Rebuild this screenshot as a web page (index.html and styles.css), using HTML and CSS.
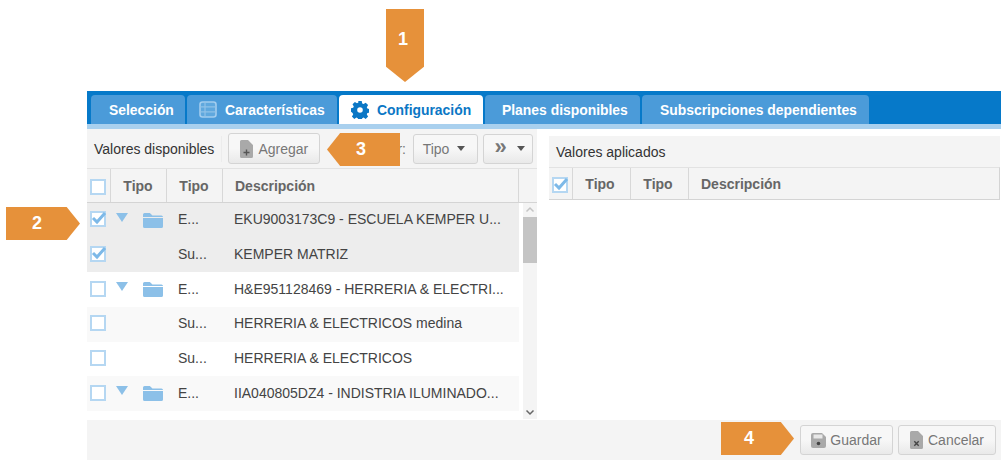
FILE: index.html
```html
<!DOCTYPE html>
<html lang="es">
<head>
<meta charset="utf-8">
<title>Configuración</title>
<link rel="stylesheet" href="styles.css">
</head>
<body>
<div class="app">
  <nav class="tabs">
    <a class="tab tab-sel">Selección</a>
    <a class="tab tab-car">
      <svg class="tab-icon" width="18" height="17" viewBox="0 0 18 17"><rect x="1" y="1" width="16" height="15" rx="2.500" fill="#5fa8de" stroke="#a3cdee" stroke-width="1.600"/><path d="M6 1.500V15.500M1.500 5.800H16.500M1.500 10.800H16.500" stroke="#8fc1e8" stroke-width="1.200" fill="none"/></svg>
      Características</a>
    <a class="tab tab-conf active">
      <svg class="tab-icon" width="18" height="18" viewBox="0 0 18 18"><path fill="#0b77c5" fill-rule="evenodd" d="M7.300 0h3.400l.5 2.400 1.400.6 2.100-1.300 2.400 2.400-1.300 2.100.6 1.400 2.400.5v3.400l-2.400.5-.6 1.400 1.300 2.100-2.400 2.400-2.100-1.300-1.400.6-.5 2.400H7.300l-.5-2.400-1.400-.6-2.100 1.300-2.400-2.400 1.300-2.100-.6-1.400L-.2 10.700V7.300l2.400-.5.6-1.400-1.300-2.100 2.400-2.400 2.100 1.300 1.400-.6zM9 6.200a2.800 2.800 0 1 0 0 5.600 2.800 2.800 0 0 0 0-5.600z"/></svg>
      Configuración</a>
    <a class="tab tab-plan">Planes disponibles</a>
    <a class="tab tab-sub">Subscripciones dependientes</a>
  </nav>
  <div class="stripe"></div>

  <main class="panels">
    <section class="panel-left">
      <div class="toolbar">
        <span class="toolbar-title">Valores disponibles</span>
        <span class="toolbar-sep"></span>
        <button class="btn btn-add">
          <svg class="btn-icon" width="13" height="18" viewBox="0 0 13 18"><path fill="#a9a9a9" d="M1.500 0H8l5 5v11.500a1.500 1.500 0 0 1-1.500 1.500h-10A1.500 1.500 0 0 1 0 16.500v-15A1.500 1.500 0 0 1 1.500 0z"/><path d="M6.500 9.500v6M3.500 12.500h6" stroke="#555" stroke-width="1.400"/></svg>
          Agregar</button>
        <span class="toolbar-label">r:</span>
        <button class="btn btn-drop btn-tipo">Tipo <i class="caret"></i></button>
        <button class="btn btn-drop btn-more"><b class="more-glyph">»</b> <i class="caret"></i></button>
      </div>
      <div class="grid-head grid-cols">
        <div class="cell-check"><span class="check"></span></div>
        <div class="hcell center">Tipo</div>
        <div class="hcell center">Tipo</div>
        <div class="hcell desc">Descripción</div>
        <div class="hcell-rest"></div>
      </div>
      <div class="grid-area">
        <div class="rows">
          <div class="row row-sel">
            <div class="cell-check"><span class="check checked"><svg width="17" height="17" viewBox="0 0 17 17"><path d="M3 8l4 4 8-9" fill="none" stroke="#7db9e8" stroke-width="3"/></svg></span></div>
            <div class="cell-tree"><i class="tri"></i><svg class="folder" width="20" height="15" viewBox="0 0 19 15" preserveAspectRatio="none"><path fill="#8cc0e8" d="M0 1.500A1.500 1.500 0 0 1 1.500 0h5L9 2.500h8.500A1.500 1.500 0 0 1 19 4H0zM0 5h19v8.500a1.500 1.500 0 0 1-1.500 1.500h-16A1.500 1.500 0 0 1 0 13.500z"/></svg></div>
            <div class="cell-type">E...</div>
            <div class="cell-desc">EKU9003173C9 - ESCUELA KEMPER U...</div>
          </div>
          <div class="row row-sel">
            <div class="cell-check"><span class="check checked"><svg width="17" height="17" viewBox="0 0 17 17"><path d="M3 8l4 4 8-9" fill="none" stroke="#7db9e8" stroke-width="3"/></svg></span></div>
            <div class="cell-tree"></div>
            <div class="cell-type">Su...</div>
            <div class="cell-desc">KEMPER MATRIZ</div>
          </div>
          <div class="row">
            <div class="cell-check"><span class="check"></span></div>
            <div class="cell-tree"><i class="tri"></i><svg class="folder" width="20" height="15" viewBox="0 0 19 15" preserveAspectRatio="none"><path fill="#8cc0e8" d="M0 1.500A1.500 1.500 0 0 1 1.500 0h5L9 2.500h8.500A1.500 1.500 0 0 1 19 4H0zM0 5h19v8.500a1.500 1.500 0 0 1-1.500 1.500h-16A1.500 1.500 0 0 1 0 13.500z"/></svg></div>
            <div class="cell-type">E...</div>
            <div class="cell-desc">H&amp;E951128469 - HERRERIA &amp; ELECTRI...</div>
          </div>
          <div class="row row-alt">
            <div class="cell-check"><span class="check"></span></div>
            <div class="cell-tree"></div>
            <div class="cell-type">Su...</div>
            <div class="cell-desc">HERRERIA &amp; ELECTRICOS medina</div>
          </div>
          <div class="row">
            <div class="cell-check"><span class="check"></span></div>
            <div class="cell-tree"></div>
            <div class="cell-type">Su...</div>
            <div class="cell-desc">HERRERIA &amp; ELECTRICOS</div>
          </div>
          <div class="row row-alt">
            <div class="cell-check"><span class="check"></span></div>
            <div class="cell-tree"><i class="tri"></i><svg class="folder" width="20" height="15" viewBox="0 0 19 15" preserveAspectRatio="none"><path fill="#8cc0e8" d="M0 1.500A1.500 1.500 0 0 1 1.500 0h5L9 2.500h8.500A1.500 1.500 0 0 1 19 4H0zM0 5h19v8.500a1.500 1.500 0 0 1-1.500 1.500h-16A1.500 1.500 0 0 1 0 13.500z"/></svg></div>
            <div class="cell-type">E...</div>
            <div class="cell-desc">IIA040805DZ4 - INDISTRIA ILUMINADO...</div>
          </div>
        </div>
        <div class="scrollbar">
          <svg class="sb-arrow" width="14" height="14" viewBox="0 0 14 14"><path d="M3.500 8.500L7 5l3.500 3.500" fill="none" stroke="#c4c4c4" stroke-width="1.500"/></svg>
          <div class="sb-thumb"></div>
          <svg class="sb-arrow sb-down" width="14" height="14" viewBox="0 0 14 14"><path d="M3.500 5.500L7 9l3.500-3.500" fill="none" stroke="#666" stroke-width="1.500"/></svg>
        </div>
      </div>
    </section>

    <section class="panel-right">
      <div class="toolbar-right">Valores aplicados</div>
      <div class="grid-head grid-cols-right">
        <div class="cell-check"><span class="check checked"><svg width="17" height="17" viewBox="0 0 17 17"><path d="M3 8l4 4 8-9" fill="none" stroke="#7db9e8" stroke-width="3"/></svg></span></div>
        <div class="hcell center">Tipo</div>
        <div class="hcell center">Tipo</div>
        <div class="hcell desc">Descripción</div>
      </div>
    </section>
  </main>

  <footer class="footer">
    <button class="btn btn-save">
      <svg class="btn-icon" width="15" height="15" viewBox="0 0 15 15"><path fill="#a9a9a9" d="M2 0h9l4 4v9a2 2 0 0 1-2 2H2a2 2 0 0 1-2-2V2a2 2 0 0 1 2-2z"/><rect x="2.500" y="1.500" width="9" height="4" fill="#e8e8e8"/><circle cx="7.500" cy="10.500" r="1.800" fill="#444"/></svg>
      Guardar</button>
    <button class="btn btn-cancel">
      <svg class="btn-icon" width="13" height="18" viewBox="0 0 13 18"><path fill="#a9a9a9" d="M1.500 0H8l5 5v11.500a1.500 1.500 0 0 1-1.500 1.500h-10A1.500 1.500 0 0 1 0 16.500v-15A1.500 1.500 0 0 1 1.500 0z"/><path d="M4.300 10.300l4.400 4.400M8.700 10.300l-4.400 4.400" stroke="#444" stroke-width="1.400"/></svg>
      Cancelar</button>
  </footer>
</div>

<div class="callout callout-down c1">1</div>
<div class="callout callout-right c2">2</div>
<div class="callout callout-left c3">3</div>
<div class="callout callout-right c4">4</div>
</body>
</html>
```

FILE: styles.css
```css
* { box-sizing: border-box; }
html, body { margin: 0; padding: 0; background: #fff; }
body {
  width: 1003px;
  height: 466px;
  overflow: hidden;
  position: relative;
  font-family: "Liberation Sans", Arial, sans-serif;
  font-size: 14px;
  color: #333;
}
.app { margin: 91px 0 0 87px; width: 914px; }

/* tabs */
.tabs {
  display: flex;
  gap: 2px;
  height: 33px;
  padding: 4px 0 0 4px;
  background: #0679c9;
}
.tab {
  display: flex;
  align-items: center;
  height: 29px;
  border-radius: 4px 4px 0 0;
  background: #4b9bd9;
  color: #fff;
  font-weight: bold;
  font-size: 13.900px;
  white-space: nowrap;
}
.tab.active { background: #fff; color: #0b77c5; }
.tab-sel { width: 94px; padding-left: 18px; }
.tab-car { width: 150px; padding-left: 12px; }
.tab-conf { width: 144px; padding-left: 12px; }
.tab-plan { width: 155px; padding-left: 17px; }
.tab-sub { width: 227px; padding-left: 18px; }
.tab-icon { margin-right: 8px; flex: none; }
.stripe { height: 5px; background: #a9d0ee; }

/* panels */
.panels { display: flex; height: 291px; }
.panel-left { width: 450px; flex: none; }
.panel-right { width: 451px; margin-left: 12px; padding-top: 7px; }

.toolbar {
  display: flex;
  align-items: center;
  height: 40px;
  padding: 0 4px 0 7px;
  background: #f4f4f4;
  border-bottom: 1px solid #e2e2e2;
}
.toolbar-title { font-size: 14px; color: #333; white-space: nowrap; }
.toolbar-sep { width: 1px; height: 26px; margin: 0 6px 0 7px; background: #ececec; }
.toolbar-label { margin-left: auto; margin-right: 7px; color: #777; font-size: 14px; }

.btn {
  display: flex;
  align-items: center;
  justify-content: center;
  height: 31px;
  padding: 0;
  border: 1px solid #d4d4d4;
  border-radius: 3px;
  background: linear-gradient(#f7f7f7 0, #f7f7f7 50%, #e9e9e9 100%);
  font-family: inherit;
  font-size: 14px;
  color: #777;
}
.btn-add { width: 92px; gap: 5px; }
.btn-drop { height: 30px; }
.btn-tipo { width: 65px; gap: 8px; padding-right: 3px; }
.btn-more { width: 50px; margin-left: 5px; gap: 10px; padding-left: 3px; }
.more-glyph { font-size: 22px; line-height: 1; position: relative; top: -2px; }
.caret {
  width: 0;
  height: 0;
  border-left: 4px solid transparent;
  border-right: 4px solid transparent;
  border-top: 5px solid #555;
}

/* grid */
.grid-head {
  display: grid;
  height: 33px;
  background: #f4f4f4;
  border-bottom: 1px solid #d4d4d4;
}
.grid-cols { grid-template-columns: 23px 56px 56px 296px 1fr; height: 34px; }
.grid-cols-right { grid-template-columns: 23px 58px 58px 1fr; border-top: 1px solid #e2e2e2; border-right: 1px solid #d4d4d4; }
.hcell {
  display: flex;
  align-items: center;
  font-weight: bold;
  font-size: 14px;
  color: #666;
  border-left: 1px solid #d8d8d8;
}
.hcell-rest { border-left: 1px solid #d8d8d8; }
.hcell.center { justify-content: center; padding-right: 1px; }
.grid-cols-right .hcell.center { padding-right: 3px; }
.hcell.desc { padding-left: 12px; }

.cell-check { display: flex; align-items: center; padding-left: 3px; }
.check {
  position: relative;
  display: block;
  width: 16px;
  height: 16px;
  border: 2px solid #b5d7f2;
  background: #fff;
}
.check svg { position: absolute; left: -2px; top: -3px; }
.grid-head .check { margin-top: 3px; }

.grid-area { display: flex; height: 216px; }
.rows { width: 432px; margin-right: 4px; flex: none; }
.row {
  display: grid;
  grid-template-columns: 23px 56px 56px 1fr;
  align-items: center;
  height: 34.660px;
  padding-bottom: 2px;
  background: #fff;
}
.row-sel { background: #ededed; }
.row-alt { background: #f9f9f9; }
.row .cell-check { height: 100%; }
.cell-tree { display: flex; align-items: center; padding-left: 6px; position: relative; top: -1px; }
.tri {
  width: 0;
  height: 0;
  border-left: 6.500px solid transparent;
  border-right: 6.500px solid transparent;
  border-top: 9px solid #8cc0e8;
  position: relative;
  top: -1px;
}
.folder { margin-left: 15px; position: relative; top: 2px; }
.cell-type { padding-left: 12px; font-size: 14px; color: #444; white-space: nowrap; }
.cell-desc { padding-left: 12px; font-size: 14px; color: #444; white-space: nowrap; }

.scrollbar {
  display: flex;
  flex-direction: column;
  width: 14px;
  background: #f4f4f4;
}
.sb-arrow { flex: none; }
.sb-thumb { width: 14px; height: 46px; background: #c4c4c4; }
.sb-down { margin-top: auto; }

.toolbar-right {
  display: flex;
  align-items: center;
  height: 31px;
  padding-left: 7px;
  background: #f4f4f4;
  font-size: 14px;
  color: #333;
}

/* footer */
.footer {
  display: flex;
  align-items: center;
  justify-content: flex-end;
  gap: 5px;
  height: 40px;
  padding-right: 5px;
  background: #f4f4f4;
}
.btn-save { width: 93px; height: 30px; gap: 4px; }
.btn-cancel { width: 98px; height: 30px; gap: 5px; }

/* annotation callouts */
.callout {
  position: absolute;
  display: flex;
  align-items: center;
  justify-content: center;
  background: #e6913a;
  color: #fff;
  font-weight: bold;
  font-size: 18px;
}
.callout-down { clip-path: polygon(0 0, 100% 0, 100% 79%, 50% 100%, 0 79%); padding: 0 4px 13px 0; }
.callout-right { clip-path: polygon(0 0, 82% 0, 100% 50%, 82% 100%, 0 100%); padding-right: 12px; }
.callout-left { clip-path: polygon(18% 0, 100% 0, 100% 100%, 18% 100%, 0 50%); padding-right: 5px; }
.c1 { left: 386px; top: 9px; width: 38px; height: 73px; }
.c2 { left: 6px; top: 207px; width: 74px; height: 33px; }
.c3 { left: 327px; top: 133px; width: 73px; height: 33px; }
.c4 { left: 721px; top: 422px; width: 73px; height: 33px; padding-right: 17px; }
```
